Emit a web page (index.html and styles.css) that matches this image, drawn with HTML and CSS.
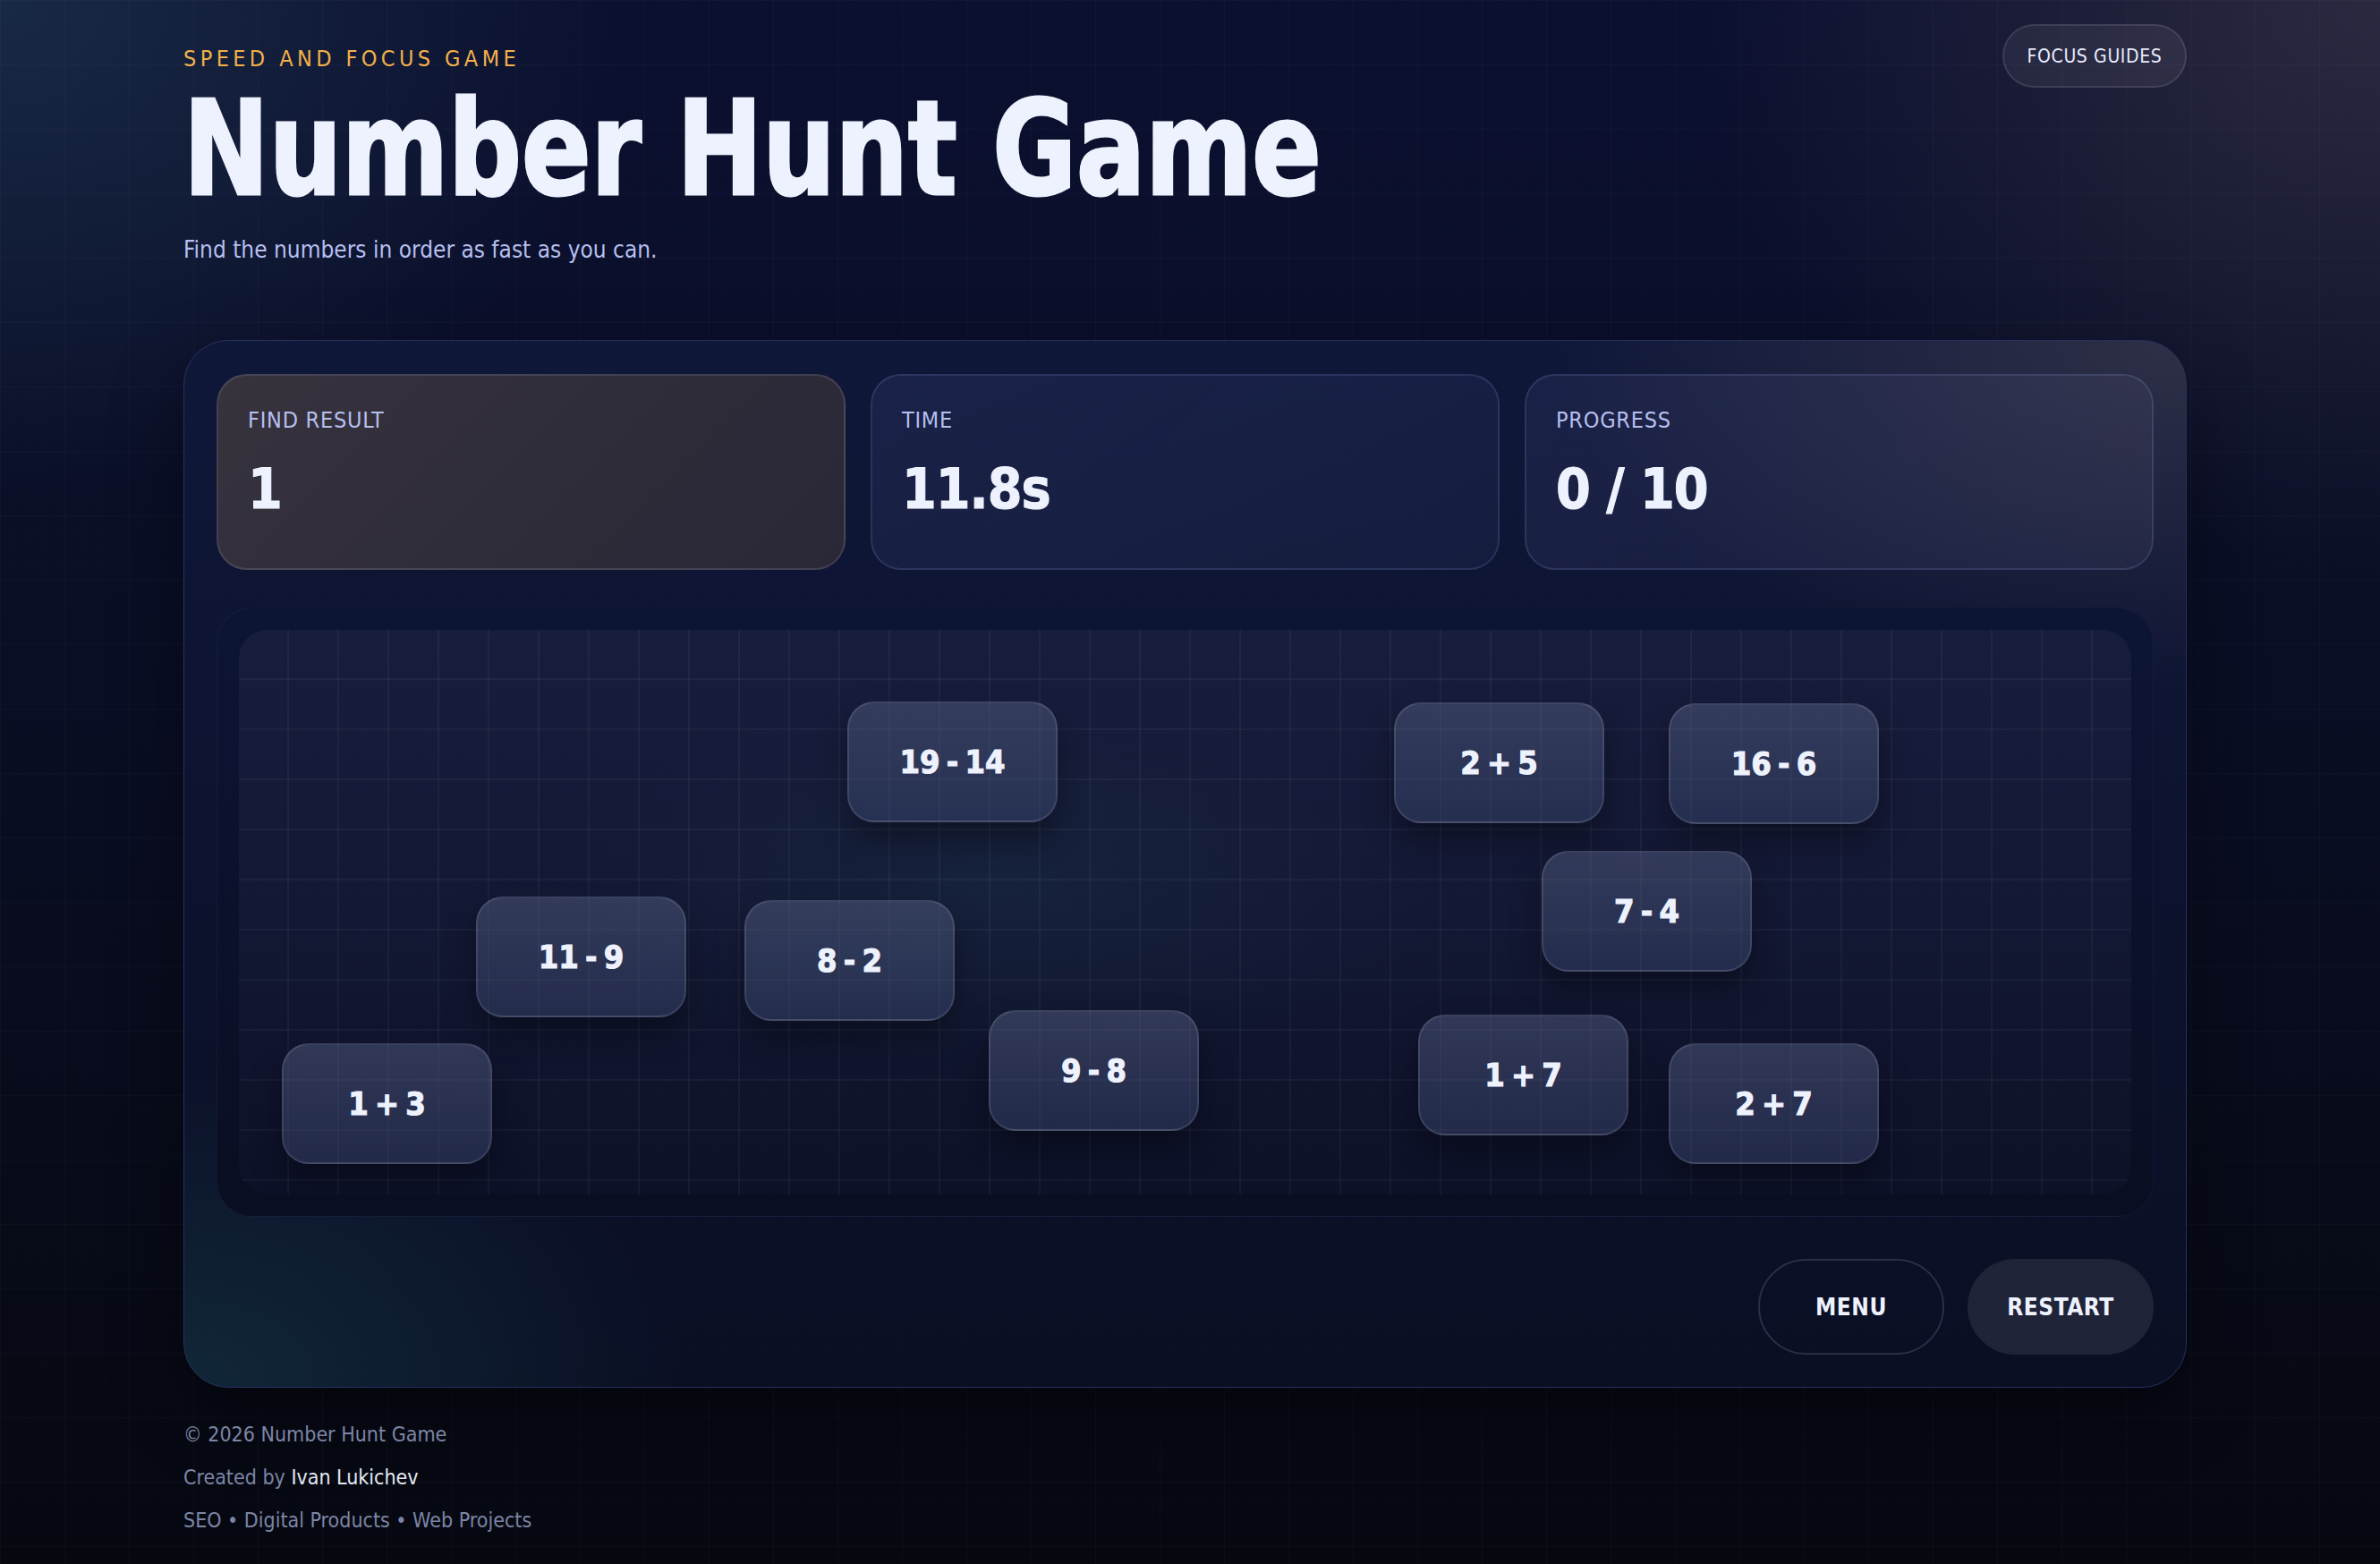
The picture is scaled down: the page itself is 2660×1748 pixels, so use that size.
FILE: index.html
```html
<!DOCTYPE html>
<html lang="en">
<head>
    <meta charset="UTF-8">
    <meta name="viewport" content="width=device-width, initial-scale=1.0">
    <title>Number Hunt Game</title>
    <link rel="stylesheet" href="styles.css">
</head>
<body>
    <div class="page">
        <header class="topbar">
            <div class="intro">
                <div class="eyebrow">Speed and focus game</div>
                <h1>Number Hunt Game</h1>
                <p class="subtitle">Find the numbers in order as fast as you can.</p>
            </div>
            <button class="guides-btn">Focus guides</button>
        </header>

        <main class="game-panel">
            <div class="stats">
                <div class="stat stat-target">
                    <div class="stat-label">Find result</div>
                    <div class="stat-value">1</div>
                </div>
                <div class="stat">
                    <div class="stat-label">Time</div>
                    <div class="stat-value">11.8s</div>
                </div>
                <div class="stat stat-progress">
                    <div class="stat-label">Progress</div>
                    <div class="stat-value">0 / 10</div>
                </div>
            </div>

            <div class="board">
                <div class="board-grid">
                    <button class="tile" style="left:680px;top:80px">19 - 14</button>
                    <button class="tile" style="left:1291px;top:81px">2 + 5</button>
                    <button class="tile" style="left:1598px;top:82px">16 - 6</button>
                    <button class="tile" style="left:1456px;top:247px">7 - 4</button>
                    <button class="tile" style="left:265px;top:298px">11 - 9</button>
                    <button class="tile" style="left:565px;top:302px">8 - 2</button>
                    <button class="tile" style="left:838px;top:425px">9 - 8</button>
                    <button class="tile" style="left:1318px;top:430px">1 + 7</button>
                    <button class="tile" style="left:48px;top:462px">1 + 3</button>
                    <button class="tile" style="left:1598px;top:462px">2 + 7</button>
                </div>
            </div>

            <div class="actions">
                <button class="btn btn-outline">Menu</button>
                <button class="btn btn-solid">Restart</button>
            </div>
        </main>

        <footer class="footer">
            <p>&copy; 2026 Number Hunt Game</p>
            <p>Created by <span class="author">Ivan Lukichev</span></p>
            <p>SEO &bull; Digital Products &bull; Web Projects</p>
        </footer>
    </div>
</body>
</html>
```

FILE: styles.css
```css
:root {
    --text: #eef2ff;
    --muted: #b6bfee;
    --accent: #f2b04a;
    --narrow: "DejaVu Sans Condensed", "Liberation Sans", sans-serif;
}

* {
    box-sizing: border-box;
}

body {
    margin: 0;
    min-height: 100vh;
    font-family: var(--narrow);
    color: var(--text);
    background:
        linear-gradient(rgba(255, 255, 255, 0.022) 1px, transparent 1px) 0 0 / 72px 72px,
        linear-gradient(90deg, rgba(255, 255, 255, 0.022) 1px, transparent 1px) 0 0 / 72px 72px,
        radial-gradient(ellipse 1000px 800px at 0 0, rgba(45, 80, 100, 0.4), transparent 70%),
        radial-gradient(ellipse 1100px 900px at 100% 0, rgba(70, 62, 78, 0.55), transparent 70%),
        linear-gradient(180deg, #0b1030 0%, #0a0e24 45%, #060810 100%);
    background-color: #070a14;
}

.page {
    padding: 27px 216px 40px 205px;
}

.topbar {
    display: flex;
    justify-content: space-between;
    align-items: flex-start;
}

.intro {
    padding-top: 24px;
}

.eyebrow {
    font-size: 25px;
    line-height: 1.2;
    text-transform: uppercase;
    letter-spacing: 4.4px;
    color: var(--accent);
}

h1 {
    margin: 0;
    font-size: 146px;
    line-height: 1.17;
    font-weight: 700;
    color: var(--text);
    -webkit-text-stroke: 3px var(--text);
    transform: scaleX(0.87);
    transform-origin: left center;
    white-space: nowrap;
}

.subtitle {
    margin: 9px 0 0;
    font-size: 26px;
    line-height: 1.4;
    color: var(--muted);
}

.guides-btn {
    width: 206px;
    height: 71px;
    padding: 0;
    border: 2px solid rgba(255, 255, 255, 0.1);
    border-radius: 36px;
    background: rgba(255, 255, 255, 0.06);
    color: #e8ecfb;
    font-family: var(--narrow);
    font-size: 21px;
    letter-spacing: 0.03em;
    text-transform: uppercase;
    cursor: pointer;
}

.game-panel {
    margin-top: 83px;
    padding: 37px 36px 36px;
    border: 1px solid #27305a;
    border-radius: 50px;
    background:
        radial-gradient(ellipse 800px 500px at 0 100%, rgba(30, 85, 95, 0.35), transparent 70%),
        radial-gradient(ellipse 1000px 560px at 100% 0, rgba(72, 68, 84, 0.55), transparent 70%),
        linear-gradient(180deg, rgba(16, 24, 58, 0.96), rgba(10, 15, 36, 0.97));
    box-shadow: 0 30px 80px rgba(0, 0, 0, 0.35);
}

.stats {
    display: grid;
    grid-template-columns: repeat(3, 1fr);
    gap: 28px;
}

.stat {
    height: 219px;
    padding: 35px 33px;
    border: 2px solid rgba(150, 165, 230, 0.16);
    border-radius: 34px;
    background: linear-gradient(135deg, rgba(120, 135, 210, 0.1), rgba(110, 125, 200, 0.07));
}

.stat-target {
    background: linear-gradient(135deg, #36333d, #2a2737);
    border-color: rgba(170, 170, 200, 0.18);
}

.stat-progress {
    background: linear-gradient(90deg, rgba(120, 130, 200, 0.1), rgba(150, 150, 190, 0.08));
}

.stat-label {
    font-size: 25px;
    line-height: 1.2;
    letter-spacing: 0.03em;
    text-transform: uppercase;
    color: var(--muted);
}

.stat-value {
    margin-top: 28px;
    font-size: 62px;
    line-height: 1.1;
    font-weight: 700;
    letter-spacing: -1px;
    color: var(--text);
    -webkit-text-stroke: 1px var(--text);
}

.board {
    margin-top: 42px;
    padding: 24px;
    border: 1px solid rgba(255, 255, 255, 0.04);
    border-radius: 40px;
    background: linear-gradient(180deg, #0d1535, #0a0e22);
}

.board-grid {
    position: relative;
    height: 631px;
    border-radius: 32px;
    overflow: hidden;
    background:
        linear-gradient(rgba(255, 255, 255, 0.04) 2px, transparent 2px) 0 -2px / 56px 56px,
        linear-gradient(90deg, rgba(255, 255, 255, 0.04) 2px, transparent 2px) -2px 0 / 56px 56px,
        radial-gradient(ellipse 700px 300px at 40% 45%, rgba(30, 60, 80, 0.25), transparent 70%),
        linear-gradient(180deg, #171d3c, #131834 50%, #0d1128);
}

.tile {
    position: absolute;
    width: 235px;
    height: 135px;
    border: 2px solid rgba(255, 255, 255, 0.1);
    border-radius: 30px;
    background: linear-gradient(180deg, rgba(90, 100, 135, 0.45), rgba(65, 78, 120, 0.4));
    box-shadow: 0 18px 34px rgba(0, 0, 0, 0.35);
    color: var(--text);
    font-family: var(--narrow);
    font-size: 36px;
    font-weight: 700;
    word-spacing: -4px;
    -webkit-text-stroke: 1px var(--text);
    cursor: pointer;
}

.actions {
    display: flex;
    justify-content: flex-end;
    gap: 26px;
    margin-top: 47px;
}

.btn {
    width: 208px;
    height: 107px;
    border-radius: 54px;
    font-family: var(--narrow);
    font-size: 26px;
    font-weight: 700;
    letter-spacing: 0.02em;
    text-transform: uppercase;
    color: var(--text);
    cursor: pointer;
}

.btn-outline {
    background: transparent;
    border: 2px solid #2a2f48;
}

.btn-solid {
    background: #1f2438;
    border: 2px solid #1f2438;
}

.footer {
    margin-top: 28px;
    font-size: 23px;
    line-height: 48px;
    color: #7c85a6;
}

.footer p {
    margin: 0;
}

.author {
    color: #e4e8f5;
}
```
